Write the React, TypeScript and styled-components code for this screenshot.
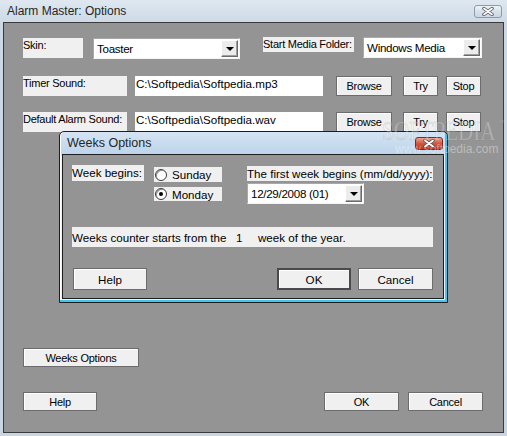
import styled, { createGlobalStyle } from "styled-components";

const GlobalStyle = createGlobalStyle`
  html, body {
    margin: 0;
    padding: 0;
    background: #ffffff;
  }
  body {
    font-family: "Liberation Sans", Arial, sans-serif;
  }
`;

const Window = styled.div`
  position: relative;
  width: 507px;
  height: 436px;
  box-sizing: border-box;
  display: flex;
  flex-direction: column;
  padding: 0 3px 3px;
  background: linear-gradient(#dfe8f1, #ccd8e5 24px, #c9d5e2);
  overflow: hidden;
`;

const TitleBar = styled.div`
  height: 22px;
  flex: 0 0 22px;
  display: flex;
  align-items: center;
  justify-content: space-between;
  padding: 0 2px 0 4px;
  font-family: "Liberation Sans", Arial, sans-serif;
  font-size: 12px;
  color: #262626;
`;

const CloseButton = styled.div<{ $red?: boolean }>`
  width: 28px;
  height: 13px;
  box-sizing: border-box;
  border: 1px solid ${(p) => (p.$red ? "#7a2a20" : "#8d9aab")};
  border-radius: 3px;
  display: flex;
  align-items: center;
  justify-content: center;
  background: ${(p) =>
    p.$red
      ? "linear-gradient(#e9a593, #d2563f 50%, #c23a22)"
      : "linear-gradient(#eef3f8, #d8e1ea 50%, #cdd8e4)"};
`;

const Client = styled.div`
  flex: 1;
  border: 1px solid #3a3a3a;
  background: #949494;
  padding: 14px 20px 0 19px;
  display: flex;
  flex-direction: column;
  font-size: 11px;
  letter-spacing: -0.25px;
  color: #000;
`;

const Row = styled.div<{ $top?: number }>`
  display: flex;
  align-items: flex-start;
  margin-top: ${(p) => p.$top ?? 0}px;
`;

const Label = styled.div<{ $w: number; $h: number; $left?: number; $top?: number }>`
  width: ${(p) => p.$w}px;
  height: ${(p) => p.$h}px;
  margin-left: ${(p) => p.$left ?? 0}px;
  margin-top: ${(p) => p.$top ?? 0}px;
  flex: 0 0 auto;
  background: #f0f0f0;
  line-height: 15px;
  white-space: nowrap;
`;

const Field = styled.div<{ $w: number; $left?: number }>`
  width: ${(p) => p.$w}px;
  height: 20px;
  margin-left: ${(p) => p.$left ?? 0}px;
  flex: 0 0 auto;
  box-sizing: border-box;
  background: #ffffff;
  padding-left: 1px;
  font-size: 11.6px;
  letter-spacing: 0;
  line-height: 15px;
  white-space: nowrap;
  overflow: hidden;
`;

const Combo = styled.div<{ $w: number; $h: number; $left?: number; $top?: number }>`
  width: ${(p) => p.$w}px;
  height: ${(p) => p.$h}px;
  margin-left: ${(p) => p.$left ?? 0}px;
  margin-top: ${(p) => p.$top ?? 0}px;
  flex: 0 0 auto;
  box-sizing: border-box;
  display: flex;
  align-items: center;
  justify-content: space-between;
  background: #ffffff;
  border-top: 1px solid #a8a8a8;
  border-left: 1px solid #a8a8a8;
  border-right: 1px solid #f4f4f4;
  border-bottom: 1px solid #f4f4f4;
  padding: 1px 1px 1px 3px;
  font-size: 11.6px;
  letter-spacing: -0.3px;
  white-space: nowrap;
`;

const DropButton = styled.div`
  width: 17px;
  height: 100%;
  flex: 0 0 17px;
  box-sizing: border-box;
  display: flex;
  align-items: center;
  justify-content: center;
  background: #ececec;
  border-top: 1px solid #ffffff;
  border-left: 1px solid #ffffff;
  border-right: 1px solid #6a6a6a;
  border-bottom: 1px solid #6a6a6a;
  box-shadow: inset -1px -1px 0 #a0a0a0;

  &::after {
    content: "";
    border-left: 4px solid transparent;
    border-right: 4px solid transparent;
    border-top: 4px solid #000;
    margin-top: 1px;
  }
`;

const Button = styled.button<{ $w: number; $h: number; $left?: number; $default?: boolean }>`
  width: ${(p) => p.$w}px;
  height: ${(p) => p.$h}px;
  margin: 0 0 0 ${(p) => p.$left ?? 0}px;
  flex: 0 0 auto;
  box-sizing: border-box;
  padding: 0;
  background: #f0f0f0;
  border: ${(p) => (p.$default ? "2px solid #4a4a4a" : "1px solid #6c6c6c")};
  box-shadow: inset 1px 1px 0 #ffffff;
  font-family: inherit;
  font-size: inherit;
  letter-spacing: inherit;
  color: #000;
`;

const Spacer = styled.div`
  flex: 1;
`;

const Dialog = styled.div`
  position: absolute;
  left: 59px;
  top: 131px;
  width: 389px;
  height: 172px;
  box-sizing: border-box;
  display: flex;
  flex-direction: column;
  border: 1px solid #1e1e1e;
  border-radius: 5px 5px 0 0;
  padding: 0 3px 3px 2px;
  background: linear-gradient(#d5e4f3, #bdd4eb 22px, #e8f4fb 24px, #e8f4fb);
  box-shadow: inset -2px -2px 0 #47c3ee, inset 1px 0 0 #ffffff;
`;

const DialogTitle = styled(TitleBar)`
  padding: 0 1px 0 5px;
  font-size: 12.5px;
`;

const DialogClient = styled.div`
  flex: 1;
  border: 1px solid #1e1e1e;
  background: #949494;
  padding: 10px 10px 0 9px;
  display: flex;
  flex-direction: column;
  font-family: "Liberation Sans", Arial, sans-serif;
  font-size: 11.6px;
  color: #000;
`;

const RadioGroup = styled.div`
  display: flex;
  flex-direction: column;
  gap: 5px;
  margin: 2px 0 0 10px;
`;

const RadioItem = styled.div<{ $h: number }>`
  width: 68px;
  height: ${(p) => p.$h}px;
  display: flex;
  align-items: center;
  gap: 5px;
  padding-left: 1px;
  box-sizing: border-box;
  background: #f0f0f0;
`;

const RadioDot = styled.span<{ $on?: boolean }>`
  width: 12px;
  height: 12px;
  box-sizing: border-box;
  border-radius: 50%;
  border: 1px solid #3c3c3c;
  background: #ffffff;
  box-shadow: inset 1px 1px 0 #9a9a9a;
  display: flex;
  align-items: center;
  justify-content: center;

  &::after {
    content: "";
    width: 4px;
    height: 4px;
    border-radius: 50%;
    background: ${(p) => (p.$on ? "#000" : "transparent")};
  }
`;

const Column = styled.div<{ $left: number }>`
  display: flex;
  flex-direction: column;
  gap: 2px;
  margin-left: ${(p) => p.$left}px;
`;

const Strip = styled.div`
  width: 361px;
  height: 20px;
  margin-top: 23px;
  display: flex;
  align-items: center;
  background: #f0f0f0;
  white-space: nowrap;
`;

const StripPart = styled.span<{ $w?: number }>`
  width: ${(p) => (p.$w ? `${p.$w}px` : "auto")};
  flex: 0 0 auto;
`;

const WaterBig = styled.div`
  position: absolute;
  left: 382px;
  top: 108px;
  pointer-events: none;
  font-family: "Liberation Serif", serif;
  font-size: 27px;
  line-height: 30px;
  white-space: nowrap;
  transform: scaleX(0.78);
  transform-origin: left top;
  color: rgba(255, 255, 255, 0.3);
  -webkit-text-stroke: 0.7px rgba(110, 110, 110, 0.25);

  sup {
    font-family: "Liberation Sans", sans-serif;
    font-size: 9px;
    vertical-align: 14px;
    margin-left: 2px;
  }
`;

const WaterSmall = styled.div`
  position: absolute;
  left: 395px;
  top: 142px;
  pointer-events: none;
  font-family: "Liberation Sans", sans-serif;
  font-size: 12px;
  white-space: nowrap;
  color: rgba(255, 255, 255, 0.38);
`;

function CloseGlyph() {
  return (
    <svg width="12" height="9" viewBox="0 0 12 9">
      <path d="M2 1.5 L10 7.5 M10 1.5 L2 7.5" stroke="#4a4f57" strokeWidth="3.4" strokeLinecap="round" />
      <path d="M2 1.5 L10 7.5 M10 1.5 L2 7.5" stroke="#ffffff" strokeWidth="1.8" strokeLinecap="round" />
    </svg>
  );
}

function WeeksDialog() {
  return (
    <Dialog>
      <DialogTitle>
        <span>Weeks Options</span>
        <CloseButton $red>
          <CloseGlyph />
        </CloseButton>
      </DialogTitle>
      <DialogClient>
        <Row>
          <Label $w={72} $h={16}>Week begins:</Label>
          <RadioGroup>
            <RadioItem $h={15}>
              <RadioDot />
              Sunday
            </RadioItem>
            <RadioItem $h={14}>
              <RadioDot $on />
              Monday
            </RadioItem>
          </RadioGroup>
          <Column $left={25}>
            <Label $w={186} $h={15} $top={1}>The first week begins (mm/dd/yyyy):</Label>
            <Combo $w={117} $h={21}>
              <span>12/29/2008 (01)</span>
              <DropButton />
            </Combo>
          </Column>
        </Row>
        <Strip>
          <StripPart $w={164}>Weeks counter starts from the</StripPart>
          <StripPart $w={22}>1</StripPart>
          <StripPart>week of the year.</StripPart>
        </Strip>
        <Row $top={21}>
          <Button $w={74} $h={22} $left={1}>Help</Button>
          <Button $w={74} $h={22} $left={130} $default>OK</Button>
          <Button $w={75} $h={22} $left={7}>Cancel</Button>
        </Row>
      </DialogClient>
    </Dialog>
  );
}

export default function App() {
  return (
    <Window>
      <GlobalStyle />
      <TitleBar>
        <span>Alarm Master: Options</span>
        <CloseButton>
          <CloseGlyph />
        </CloseButton>
      </TitleBar>
      <Client>
        <Row>
          <Label $w={60} $h={20} $top={1}>Skin:</Label>
          <Combo $w={147} $h={21} $left={10} $top={1}>
            <span>Toaster</span>
            <DropButton />
          </Combo>
          <Label $w={91} $h={15} $left={23}>Start Media Folder:</Label>
          <Combo $w={119} $h={21} $left={9}>
            <span>Windows Media</span>
            <DropButton />
          </Combo>
        </Row>
        <Row $top={17}>
          <Label $w={104} $h={20}>Timer Sound:</Label>
          <Field $w={188} $left={8}>C:\Softpedia\Softpedia.mp3</Field>
          <Button $w={56} $h={20} $left={13}>Browse</Button>
          <Button $w={35} $h={20} $left={11}>Try</Button>
          <Button $w={35} $h={20} $left={8}>Stop</Button>
        </Row>
        <Row $top={16}>
          <Label $w={104} $h={20}>Default Alarm Sound:</Label>
          <Field $w={188} $left={8}>C:\Softpedia\Softpedia.wav</Field>
          <Button $w={56} $h={20} $left={13}>Browse</Button>
          <Button $w={35} $h={20} $left={11}>Try</Button>
          <Button $w={35} $h={20} $left={8}>Stop</Button>
        </Row>
        <Row $top={216}>
          <Button $w={116} $h={19}>Weeks Options</Button>
        </Row>
        <Row $top={25}>
          <Button $w={74} $h={19}>Help</Button>
          <Spacer />
          <Button $w={75} $h={19}>OK</Button>
          <Button $w={75} $h={19} $left={9}>Cancel</Button>
        </Row>
      </Client>
      <WeeksDialog />
      <WaterBig>
        SOFTPEDIA<sup>™</sup>
      </WaterBig>
      <WaterSmall>www.softpedia.com</WaterSmall>
    </Window>
  );
}
